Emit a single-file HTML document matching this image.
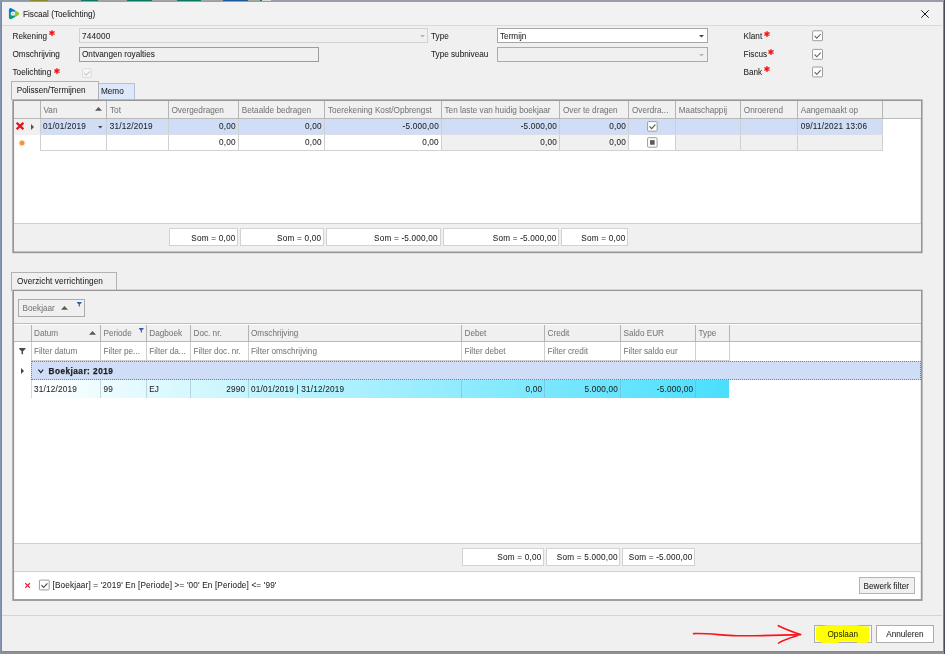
<!DOCTYPE html>
<html lang="nl">
<head>
<meta charset="utf-8">
<title>Fiscaal (Toelichting)</title>
<style>
html,body{margin:0;padding:0;}
body{will-change:transform;width:945px;height:654px;overflow:hidden;background:#8494b3;position:relative;font-family:"Liberation Sans",sans-serif;font-size:8.2px;color:#1e1e1e;}
div,span{box-sizing:border-box;}
.a{position:absolute;}
.t{-webkit-text-stroke:0.05px;position:absolute;line-height:12px;height:12px;white-space:nowrap;}
.r{text-align:right;}
.g{color:#787878;}
.n{letter-spacing:0.2px;}
.red{color:#f01414;font-size:11px;font-weight:bold;}
.hl{position:absolute;width:1px;background:#b4b4b4;}
.cl{position:absolute;width:1px;background:#cfcfcf;}
.cb{position:absolute;background:#fff;border:1px solid #a9a9a9;border-radius:1px;}
.sum{position:absolute;background:#fff;border:1px solid #d2d2d2;height:18px;}
svg{position:absolute;overflow:visible;}
</style>
</head>
<body>
<!-- background strip behind window -->
<div class="a" id="topstrip" style="left:0;top:0;width:945px;height:2px;background:linear-gradient(90deg,#8f99ad 0 30px,#8a8a30 30px 48px,#a0a0a0 48px 81px,#0c7a63 81px 98px,#a4a4a4 98px 127px,#0c7a63 127px 152px,#a4a4a4 152px 177px,#0c7a63 177px 201px,#a4a4a4 201px 223px,#1f5a9e 223px 248px,#a4a4a4 248px 260px,#0c7a63 260px 262px,#d8d8d8 262px 271px,#9a9ca6 271px 945px);"></div>
<!-- window -->
<div class="a" id="win" style="left:1px;top:1px;width:942.5px;height:650.5px;background:#f0f0f0;border:1px solid #6f88b8;border-top-color:#8da0c4;"></div>
<div class="a" style="left:0;top:652px;width:945px;height:2px;background:#8e9094;"></div>
<div class="a" style="left:944px;top:0;width:1px;height:654px;background:#4a4f5c;"></div>
<!-- title bar -->
<div class="a" style="left:2px;top:2px;width:940px;height:23px;background:#f2f2f2;"></div>
<div class="a" style="left:2px;top:25px;width:940px;height:1px;background:#d9d9d9;"></div>
<svg style="left:0;top:0" width="30" height="26" viewBox="0 0 30 26">
<defs><mask id="im"><path d="M10.6 9.8 L10.6 17.6 L17.4 13.7 Z" fill="#fff" stroke="#fff" stroke-width="3.4" stroke-linejoin="round"/></mask></defs>
<g mask="url(#im)">
<rect x="7" y="6" width="14" height="15" fill="#0b9a7c"/>
<path d="M12.9 13.6 L7 13.2 L7 6 L15.6 6 L15.2 10.4 Z" fill="#0b78d2"/>
<path d="M12.9 13.6 L15.2 10.4 L15.6 6 L21 6 L21 21 L15.4 21 L15 16.6 Z" fill="#8bc81f"/>
</g>
<circle cx="12.9" cy="13.6" r="2.2" fill="#f4f6f8"/><circle cx="12.9" cy="13.6" r="0.8" fill="#a9adb3"/>
</svg>
<div class="t" style="left:23px;top:8.6px;">Fiscaal (Toelichting)</div>
<svg style="left:921px;top:9.7px" width="8" height="8" viewBox="0 0 8 8"><path d="M0.3 0.3 L7.7 7.7 M7.7 0.3 L0.3 7.7" stroke="#1c1c1c" stroke-width="1" fill="none"/></svg>

<!-- form row 1 -->
<div class="t" style="left:12.5px;top:30.8px;">Rekening</div>
<svg style="left:51.6px;top:33.2px" width="1" height="1" viewBox="0 0 1 1"><path d="M0 -2.4 L0 2.4 M-2.1 -1.2 L2.1 1.2 M-2.1 1.2 L2.1 -1.2" stroke="#fa1212" stroke-width="1.35" stroke-linecap="round" fill="none"/></svg>
<div class="a" style="left:78.5px;top:28.3px;width:349px;height:15px;background:#f0f0f0;border:1px solid #d2d2d2;"></div>
<div class="t n" style="left:82px;top:30.8px;">744000</div>
<svg style="left:419.5px;top:35px" width="5" height="3" viewBox="0 0 5 3"><path d="M0 0 L5 0 L2.5 2.6 Z" fill="#b4b4b4"/></svg>
<div class="t" style="left:431px;top:30.8px;">Type</div>
<div class="a" style="left:496.5px;top:28.3px;width:211px;height:15px;background:#fff;border:1px solid #a6a6a6;"></div>
<div class="t" style="left:500px;top:30.8px;">Termijn</div>
<svg style="left:699px;top:35px" width="5" height="3" viewBox="0 0 5 3"><path d="M0 0 L5 0 L2.5 2.6 Z" fill="#444"/></svg>
<div class="t" style="left:743.5px;top:30.8px;">Klant</div>
<svg style="left:767.4px;top:33.5px" width="1" height="1" viewBox="0 0 1 1"><path d="M0 -2.4 L0 2.4 M-2.1 -1.2 L2.1 1.2 M-2.1 1.2 L2.1 -1.2" stroke="#fa1212" stroke-width="1.35" stroke-linecap="round" fill="none"/></svg>

<!-- form row 2 -->
<div class="t" style="left:12.5px;top:49.3px;">Omschrijving</div>
<div class="a" style="left:78.5px;top:47px;width:240.5px;height:15px;background:#f0f0f0;border:1px solid #9c9c9c;"></div>
<div class="t" style="left:82px;top:49.3px;">Ontvangen royalties</div>
<div class="t" style="left:431px;top:49.3px;">Type subniveau</div>
<div class="a" style="left:496.5px;top:47px;width:211px;height:15px;background:#f0f0f0;border:1px solid #ababab;"></div>
<svg style="left:699px;top:53.5px" width="5" height="3" viewBox="0 0 5 3"><path d="M0 0 L5 0 L2.5 2.6 Z" fill="#b4b4b4"/></svg>
<div class="t" style="left:743.5px;top:49.3px;">Fiscus</div>
<svg style="left:771.3px;top:52px" width="1" height="1" viewBox="0 0 1 1"><path d="M0 -2.4 L0 2.4 M-2.1 -1.2 L2.1 1.2 M-2.1 1.2 L2.1 -1.2" stroke="#fa1212" stroke-width="1.35" stroke-linecap="round" fill="none"/></svg>

<!-- form row 3 -->
<div class="t" style="left:12.5px;top:67px;">Toelichting</div>
<svg style="left:57px;top:70.6px" width="1" height="1" viewBox="0 0 1 1"><path d="M0 -2.4 L0 2.4 M-2.1 -1.2 L2.1 1.2 M-2.1 1.2 L2.1 -1.2" stroke="#fa1212" stroke-width="1.35" stroke-linecap="round" fill="none"/></svg>
<div class="t" style="left:743.5px;top:67px;">Bank</div>
<svg style="left:766.7px;top:69.3px" width="1" height="1" viewBox="0 0 1 1"><path d="M0 -2.4 L0 2.4 M-2.1 -1.2 L2.1 1.2 M-2.1 1.2 L2.1 -1.2" stroke="#fa1212" stroke-width="1.35" stroke-linecap="round" fill="none"/></svg>

<!-- SECTION-GRID1 -->
<!-- tabs 1 -->
<div class="a" style="left:98.4px;top:83.4px;width:36.6px;height:16px;background:#dde8fb;border:1px solid #b4c0d8;border-bottom:none;"></div>
<div class="t" style="left:101px;top:85.6px;">Memo</div>
<div class="a" style="left:11px;top:81.1px;width:87.6px;height:19px;background:#f0f0f0;border:1px solid #b2b2b2;border-bottom:none;"></div>
<div class="t" style="left:16.8px;top:84.9px;">Polissen/Termijnen</div>
<!-- grid 1 -->
<div class="a" style="left:13px;top:100.4px;width:909px;height:151.8px;background:#fff;"></div><svg style="left:0;top:0" width="945" height="654" viewBox="0 0 945 654"><rect x="13.20" y="100.30" width="908.50" height="152.00" fill="none" stroke="#969696" stroke-width="1.8"/></svg>
<div class="a" style="left:14px;top:101.1px;width:906.6px;height:17px;background:#f0f0f0;"></div>
<div class="a" style="left:14px;top:118px;width:906.6px;height:1px;background:#b9b9b9;"></div>
<div class="hl" style="left:40.0px;top:101.1px;height:17px;"></div>
<div class="hl" style="left:106.0px;top:101.1px;height:17px;"></div>
<div class="hl" style="left:167.8px;top:101.1px;height:17px;"></div>
<div class="hl" style="left:238.0px;top:101.1px;height:17px;"></div>
<div class="hl" style="left:324.0px;top:101.1px;height:17px;"></div>
<div class="hl" style="left:441.1px;top:101.1px;height:17px;"></div>
<div class="hl" style="left:559.3px;top:101.1px;height:17px;"></div>
<div class="hl" style="left:628.3px;top:101.1px;height:17px;"></div>
<div class="hl" style="left:675.0px;top:101.1px;height:17px;"></div>
<div class="hl" style="left:740.0px;top:101.1px;height:17px;"></div>
<div class="hl" style="left:797.0px;top:101.1px;height:17px;"></div>
<div class="hl" style="left:882.0px;top:101.1px;height:17px;"></div>
<div class="t g" style="left:43.5px;top:104.6px;">Van</div>
<div class="t g" style="left:110px;top:104.6px;">Tot</div>
<div class="t g" style="left:171.5px;top:104.6px;">Overgedragen</div>
<div class="t g" style="left:241.8px;top:104.6px;">Betaalde bedragen</div>
<div class="t g" style="left:328px;top:104.6px;">Toerekening Kost/Opbrengst</div>
<div class="t g" style="left:444.5px;top:104.6px;">Ten laste van huidig boekjaar</div>
<div class="t g" style="left:563px;top:104.6px;">Over te dragen</div>
<div class="t g" style="left:632px;top:104.6px;">Overdra...</div>
<div class="t g" style="left:678.8px;top:104.6px;">Maatschappij</div>
<div class="t g" style="left:743.8px;top:104.6px;">Onroerend</div>
<div class="t g" style="left:800.8px;top:104.6px;">Aangemaakt op</div>
<svg style="left:95px;top:107.4px" width="7" height="4" viewBox="0 0 7 4"><path d="M0 3.8 L3.5 0 L7 3.8 Z" fill="#5a5a5a"/></svg>
<div class="a" style="left:14px;top:118.5px;width:27px;height:16px;background:#f0f0f0;"></div>
<div class="a" style="left:41px;top:118.5px;width:841.5px;height:16px;background:#cfddf6;"></div>
<div class="a" style="left:441.6px;top:134.5px;width:118.2px;height:16px;background:#f0f0f0;"></div>
<div class="a" style="left:559.8px;top:134.5px;width:69.0px;height:16px;background:#f0f0f0;"></div>
<div class="a" style="left:675.5px;top:134.5px;width:65.0px;height:16px;background:#f0f0f0;"></div>
<div class="a" style="left:740.5px;top:134.5px;width:57.0px;height:16px;background:#f0f0f0;"></div>
<div class="a" style="left:797.5px;top:134.5px;width:85.0px;height:16px;background:#f0f0f0;"></div>
<div class="cl" style="left:40.0px;top:119px;height:32px;"></div>
<div class="cl" style="left:106.0px;top:119px;height:32px;"></div>
<div class="cl" style="left:167.8px;top:119px;height:32px;"></div>
<div class="cl" style="left:238.0px;top:119px;height:32px;"></div>
<div class="cl" style="left:324.0px;top:119px;height:32px;"></div>
<div class="cl" style="left:441.1px;top:119px;height:32px;"></div>
<div class="cl" style="left:559.3px;top:119px;height:32px;"></div>
<div class="cl" style="left:628.3px;top:119px;height:32px;"></div>
<div class="cl" style="left:675.0px;top:119px;height:32px;"></div>
<div class="cl" style="left:740.0px;top:119px;height:32px;"></div>
<div class="cl" style="left:797.0px;top:119px;height:32px;"></div>
<div class="cl" style="left:882.0px;top:119px;height:32px;"></div>
<div class="a" style="left:40px;top:134.2px;width:843px;height:1px;background:#d9dde6;"></div>
<div class="a" style="left:40px;top:150.2px;width:843px;height:1px;background:#d2d2d2;"></div>
<svg style="left:19.85px;top:126.3px" width="1" height="1" viewBox="0 0 1 1"><path d="M-2.55 -2.45 L2.55 2.45 M2.55 -2.45 L-2.55 2.45" stroke="#e6141c" stroke-width="2.3" stroke-linecap="square" fill="none"/></svg>
<svg style="left:31px;top:123.5px" width="3" height="6" viewBox="0 0 3 6"><path d="M0 0 L3 3 L0 6 Z" fill="#555"/></svg>
<svg style="left:22.2px;top:142.7px" width="1" height="1" viewBox="0 0 1 1"><polygon points="0.00,-3.70 0.73,-1.76 2.62,-2.62 1.76,-0.73 3.70,-0.00 1.76,0.73 2.62,2.62 0.73,1.76 0.00,3.70 -0.73,1.76 -2.62,2.62 -1.76,0.73 -3.70,0.00 -1.76,-0.73 -2.62,-2.62 -0.73,-1.76" fill="#f0943a"/></svg>
<div class="t n" style="left:43px;top:121px;">01/01/2019</div>
<svg style="left:98px;top:126px" width="4.5" height="2.6" viewBox="0 0 5 3"><path d="M0 0 L5 0 L2.5 2.8 Z" fill="#444"/></svg>
<div class="t n" style="left:109.8px;top:121px;">31/12/2019</div>
<div class="t r n" style="left:155.5px;width:80.3px;top:121px;">0,00</div>
<div class="t r n" style="left:241.5px;width:80.3px;top:121px;">0,00</div>
<div class="t r n" style="left:358.6px;width:80.3px;top:121px;">-5.000,00</div>
<div class="t r n" style="left:476.79999999999995px;width:80.3px;top:121px;">-5.000,00</div>
<div class="t r n" style="left:545.8px;width:80.3px;top:121px;">0,00</div>
<div class="t r n" style="left:155.5px;width:80.3px;top:137px;">0,00</div>
<div class="t r n" style="left:241.5px;width:80.3px;top:137px;">0,00</div>
<div class="t r n" style="left:358.6px;width:80.3px;top:137px;">0,00</div>
<div class="t r n" style="left:476.79999999999995px;width:80.3px;top:137px;">0,00</div>
<div class="t r n" style="left:545.8px;width:80.3px;top:137px;">0,00</div>
<div class="t n" style="left:800.8px;top:121px;">09/11/2021 13:06</div>
<div class="a" style="left:14px;top:223.2px;width:906.6px;height:28.3px;background:#f0f0f0;border-top:1px solid #d0d0d0;"></div>
<div class="sum" style="left:169px;top:228px;width:69px;height:18px;"></div>
<div class="t r n" style="left:169.5px;width:65.9px;top:232.6px;">Som = 0,00</div>
<div class="sum" style="left:240px;top:228px;width:84px;height:18px;"></div>
<div class="t r n" style="left:240.5px;width:80.7px;top:232.6px;">Som = 0,00</div>
<div class="sum" style="left:326px;top:228px;width:115px;height:18px;"></div>
<div class="t r n" style="left:326.3px;width:111.5px;top:232.6px;">Som = -5.000,00</div>
<div class="sum" style="left:443px;top:228px;width:116px;height:18px;"></div>
<div class="t r n" style="left:443px;width:113.6px;top:232.6px;">Som = -5.000,00</div>
<div class="sum" style="left:561px;top:228px;width:67px;height:18px;"></div>
<div class="t r n" style="left:561.5px;width:63.9px;top:232.6px;">Som = 0,00</div>
<!-- END-GRID1 -->
<!-- SECTION-GRID2 -->
<!-- tab 2 -->
<div class="a" style="left:11px;top:272.1px;width:105.6px;height:19px;background:#f0f0f0;border:1px solid #b2b2b2;border-bottom:none;"></div>
<div class="t" style="left:17px;top:275.8px;letter-spacing:0.1px;">Overzicht verrichtingen</div>
<!-- panel 2 -->
<div class="a" style="left:13px;top:290.7px;width:909px;height:309.2px;background:#fff;"></div><svg style="left:0;top:0" width="945" height="654" viewBox="0 0 945 654"><rect x="13.20" y="290.60" width="908.50" height="309.40" fill="none" stroke="#969696" stroke-width="1.8"/></svg>
<div class="a" style="left:14px;top:291.4px;width:906.6px;height:33px;background:#f0f0f0;border-bottom:1px solid #bdbdbd;"></div>
<div class="a" style="left:18.3px;top:298.9px;width:66.8px;height:18px;background:#f0f0f0;border:1px solid #ababab;"></div>
<div class="t g" style="left:22.5px;top:302.9px;">Boekjaar</div>
<svg style="left:61px;top:305.8px" width="7" height="4" viewBox="0 0 7 4"><path d="M0 3.8 L3.5 0 L7 3.8 Z" fill="#5a5a5a"/></svg>
<svg style="left:76.8px;top:302.4px" width="4.6" height="4.6" viewBox="0 0 5 5"><path d="M0 0 L5 0 L5 0.8 L3.1 2.6 L3.1 5 L1.9 5 L1.9 2.6 L0 0.8 Z" fill="#2e5fb0"/></svg>
<div class="a" style="left:14px;top:324.8px;width:906.6px;height:16.6px;background:#f0f0f0;"></div>
<div class="a" style="left:14px;top:341.2px;width:906.6px;height:1px;background:#b9b9b9;"></div>
<div class="hl" style="left:30.5px;top:324.8px;height:17px;"></div>
<div class="hl" style="left:99.9px;top:324.8px;height:17px;"></div>
<div class="hl" style="left:145.8px;top:324.8px;height:17px;"></div>
<div class="hl" style="left:190.0px;top:324.8px;height:17px;"></div>
<div class="hl" style="left:247.5px;top:324.8px;height:17px;"></div>
<div class="hl" style="left:460.9px;top:324.8px;height:17px;"></div>
<div class="hl" style="left:544.1px;top:324.8px;height:17px;"></div>
<div class="hl" style="left:619.9px;top:324.8px;height:17px;"></div>
<div class="hl" style="left:695.0px;top:324.8px;height:17px;"></div>
<div class="hl" style="left:728.7px;top:324.8px;height:17px;"></div>
<div class="t g" style="left:34px;top:327.9px;">Datum</div>
<div class="t g" style="left:103.5px;top:327.9px;">Periode</div>
<div class="t g" style="left:149.3px;top:327.9px;">Dagboek</div>
<div class="t g" style="left:193.5px;top:327.9px;">Doc. nr.</div>
<div class="t g" style="left:251px;top:327.9px;">Omschrijving</div>
<div class="t g" style="left:464.5px;top:327.9px;">Debet</div>
<div class="t g" style="left:547.5px;top:327.9px;">Credit</div>
<div class="t g" style="left:623.5px;top:327.9px;">Saldo EUR</div>
<div class="t g" style="left:698.5px;top:327.9px;">Type</div>
<svg style="left:88.5px;top:330.8px" width="7" height="4" viewBox="0 0 7 4"><path d="M0 3.8 L3.5 0 L7 3.8 Z" fill="#5a5a5a"/></svg>
<svg style="left:138.5px;top:327.5px" width="4.6" height="4.6" viewBox="0 0 5 5"><path d="M0 0 L5 0 L5 0.8 L3.1 2.6 L3.1 5 L1.9 5 L1.9 2.6 L0 0.8 Z" fill="#2e5fb0"/></svg>
<div class="cl" style="left:30.5px;top:342px;height:18.5px;"></div>
<div class="cl" style="left:99.9px;top:342px;height:18.5px;"></div>
<div class="cl" style="left:145.8px;top:342px;height:18.5px;"></div>
<div class="cl" style="left:190.0px;top:342px;height:18.5px;"></div>
<div class="cl" style="left:247.5px;top:342px;height:18.5px;"></div>
<div class="cl" style="left:460.9px;top:342px;height:18.5px;"></div>
<div class="cl" style="left:544.1px;top:342px;height:18.5px;"></div>
<div class="cl" style="left:619.9px;top:342px;height:18.5px;"></div>
<div class="cl" style="left:695.0px;top:342px;height:18.5px;"></div>
<div class="cl" style="left:728.7px;top:342px;height:18.5px;"></div>
<div class="a" style="left:31px;top:359.8px;width:698.5px;height:1px;background:#d2d2d2;"></div>
<svg style="left:19px;top:347.5px" width="6.6" height="6.2" viewBox="0 0 5 5"><path d="M0 0 L5 0 L5 0.8 L3.1 2.6 L3.1 5 L1.9 5 L1.9 2.6 L0 0.8 Z" fill="#4a4a4a"/></svg>
<div class="t g" style="left:34px;top:345.5px;">Filter datum</div>
<div class="t g" style="left:103.5px;top:345.5px;">Filter pe...</div>
<div class="t g" style="left:149.3px;top:345.5px;">Filter da...</div>
<div class="t g" style="left:193.5px;top:345.5px;">Filter doc. nr.</div>
<div class="t g" style="left:251px;top:345.5px;">Filter omschrijving</div>
<div class="t g" style="left:464.5px;top:345.5px;">Filter debet</div>
<div class="t g" style="left:547.5px;top:345.5px;">Filter credit</div>
<div class="t g" style="left:623.5px;top:345.5px;">Filter saldo eur</div>
<div class="a" style="left:31px;top:360.8px;width:889.6px;height:19px;background:#cfddf6;border:1px dotted #7c7c7c;"></div>
<svg style="left:20.5px;top:367.5px" width="3" height="6" viewBox="0 0 3 6"><path d="M0 0 L3 3 L0 6 Z" fill="#444"/></svg>
<svg style="left:37.5px;top:368.5px" width="5.6" height="4.4" viewBox="0 0 5.6 4.4"><path d="M0.4 0.6 L2.8 3.6 L5.2 0.6" stroke="#222" stroke-width="1.1" fill="none"/></svg>
<div class="t" style="left:48.5px;top:365.5px;font-weight:bold;letter-spacing:0.5px;-webkit-text-stroke:0.25px;">Boekjaar: 2019</div>
<div class="a" style="left:31px;top:380px;width:698.2px;height:17.5px;background:linear-gradient(90deg,#ffffff 0%,#4adffd 100%);"></div>
<div class="a" style="left:30.5px;top:380px;width:1px;height:17.5px;background:rgba(120,150,170,0.35);"></div>
<div class="a" style="left:99.9px;top:380px;width:1px;height:17.5px;background:rgba(120,150,170,0.35);"></div>
<div class="a" style="left:145.8px;top:380px;width:1px;height:17.5px;background:rgba(120,150,170,0.35);"></div>
<div class="a" style="left:190.0px;top:380px;width:1px;height:17.5px;background:rgba(120,150,170,0.35);"></div>
<div class="a" style="left:247.5px;top:380px;width:1px;height:17.5px;background:rgba(120,150,170,0.35);"></div>
<div class="a" style="left:460.9px;top:380px;width:1px;height:17.5px;background:rgba(120,150,170,0.35);"></div>
<div class="a" style="left:544.1px;top:380px;width:1px;height:17.5px;background:rgba(120,150,170,0.35);"></div>
<div class="a" style="left:619.9px;top:380px;width:1px;height:17.5px;background:rgba(120,150,170,0.35);"></div>
<div class="a" style="left:695.0px;top:380px;width:1px;height:17.5px;background:rgba(120,150,170,0.35);"></div>
<div class="t n" style="left:34px;top:384.1px;">31/12/2019</div>
<div class="t n" style="left:103.5px;top:384.1px;">99</div>
<div class="t" style="left:149.3px;top:384.1px;">EJ</div>
<div class="t r n" style="left:193px;width:52.2px;top:384.1px;">2990</div>
<div class="t n" style="left:251px;top:384.1px;">01/01/2019 | 31/12/2019</div>
<div class="t r n" style="left:470px;width:72.2px;top:384.1px;">0,00</div>
<div class="t r n" style="left:550px;width:68px;top:384.1px;">5.000,00</div>
<div class="t r n" style="left:625px;width:68.2px;top:384.1px;">-5.000,00</div>
<div class="a" style="left:14px;top:542.8px;width:906.6px;height:28.8px;background:#f0f0f0;border-top:1px solid #d0d0d0;border-bottom:1px solid #d0d0d0;"></div>
<div class="sum" style="left:462px;top:548px;width:82px;height:18px;"></div>
<div class="t r n" style="left:462.3px;width:79.1px;top:552px;">Som = 0,00</div>
<div class="sum" style="left:546px;top:548px;width:74px;height:18px;"></div>
<div class="t r n" style="left:545.7px;width:72.0px;top:552px;">Som = 5.000,00</div>
<div class="sum" style="left:622px;top:548px;width:73px;height:18px;"></div>
<div class="t r n" style="left:621.4px;width:71.2px;top:552px;">Som = -5.000,00</div>
<svg style="left:25px;top:582.9px" width="5.2" height="5" viewBox="0 0 5.2 5"><path d="M0.3 0.3 L4.9 4.7 M4.9 0.3 L0.3 4.7" stroke="#e0283c" stroke-width="1.2" fill="none"/></svg>
<div class="t" style="left:52.5px;top:579.9px;letter-spacing:0.15px;">[Boekjaar] = '2019' En [Periode] &gt;= '00' En [Periode] &lt;= '99'</div>
<div class="a" style="left:859.1px;top:576.8px;width:56px;height:17.2px;background:#f0f0f0;border:1px solid #b4b4b4;"></div>
<div class="t" style="left:858.3px;width:56px;text-align:center;letter-spacing:0.05px;top:580.5px;">Bewerk filter</div>
<!-- END-GRID2 -->
<!-- SECTION-BOTTOM -->
<div class="a" style="left:2px;top:615px;width:940px;height:1px;background:#d4d4d4;"></div>
<div class="a" style="left:814px;top:625px;width:57.5px;height:17.8px;background:#fdfdfd;border:1px solid #a9acbc;"></div>
<svg style="left:0;top:0" width="945" height="654" viewBox="0 0 945 654"><path d="M816 627.2 Q816.3 626.3 820 626.2 L827 625.3 L842 625 L857 625.3 L862 626.3 L868.6 626.5 Q869.4 626.8 869.3 628 L869.3 640 Q869 642.4 867.3 642.7 L858 642.9 L855.5 641.8 L840 641.6 L838 642.9 L822.5 642.9 L819 641.2 L816.6 640.3 Q816 640 816 639 Z" fill="#ffff00"/></svg>
<div class="t" style="left:814px;width:57.5px;text-align:center;top:628.7px;color:#30300a;">Opslaan</div>
<div class="a" style="left:876px;top:625px;width:57.8px;height:17.8px;background:#fff;border:1px solid #adadad;"></div>
<div class="t" style="left:876px;width:57.8px;text-align:center;top:628.7px;">Annuleren</div>
<svg style="left:0;top:0" width="945" height="654" viewBox="0 0 945 654"><path d="M693.6 633.6 C708 633 722 635.4 737 635.7 C760 636.2 780 635 800.7 634.6 M778.3 625.7 C786 629.5 793 632 800.7 634.6 C796 636.2 791 637.4 788.6 638.6 C784.5 640.2 781 641.6 778.6 643.1" stroke="#fb1418" stroke-width="1.6" stroke-linecap="round" stroke-linejoin="round" fill="none"/></svg>
<!-- checkbox layer -->
<svg style="left:0;top:0" width="945" height="654" viewBox="0 0 945 654">
<rect x="812.60" y="30.80" width="9.90" height="9.90" rx="0.7" fill="#fff" stroke="#9c9c9c" stroke-width="1"/><path d="M814.60 35.90 L816.80 38.20 L820.70 34.00" fill="none" stroke="#666" stroke-width="1.1"/>
<rect x="812.60" y="49.40" width="9.90" height="9.90" rx="0.7" fill="#fff" stroke="#9c9c9c" stroke-width="1"/><path d="M814.60 54.50 L816.80 56.80 L820.70 52.60" fill="none" stroke="#666" stroke-width="1.1"/>
<rect x="812.60" y="67.00" width="9.90" height="9.90" rx="0.7" fill="#fff" stroke="#9c9c9c" stroke-width="1"/><path d="M814.60 72.10 L816.80 74.40 L820.70 70.20" fill="none" stroke="#666" stroke-width="1.1"/>
<rect x="82.60" y="68.80" width="8.40" height="8.60" rx="0.7" fill="#f7f7f7" stroke="#dadada" stroke-width="1"/><path d="M84.26 73.23 L86.15 75.26 L89.52 71.56" fill="none" stroke="#c6c6c6" stroke-width="1.1"/>
<rect x="647.60" y="121.60" width="9.50" height="9.50" rx="0.7" fill="#fff" stroke="#9c9c9c" stroke-width="1"/><path d="M649.51 126.49 L651.63 128.71 L655.38 124.66" fill="none" stroke="#555" stroke-width="1.1"/>
<rect x="647.60" y="137.70" width="9.50" height="9.50" rx="0.7" fill="#fff" stroke="#9c9c9c" stroke-width="1"/><rect x="650.05" y="140.15" width="4.60" height="4.60" fill="#5a5a5a"/>
<rect x="39.40" y="580.10" width="9.80" height="9.80" rx="0.7" fill="#fff" stroke="#9c9c9c" stroke-width="1"/><path d="M41.38 585.15 L43.56 587.43 L47.42 583.27" fill="none" stroke="#505050" stroke-width="1.1"/>
</svg>
<!-- END-BOTTOM -->
</body>
</html>
